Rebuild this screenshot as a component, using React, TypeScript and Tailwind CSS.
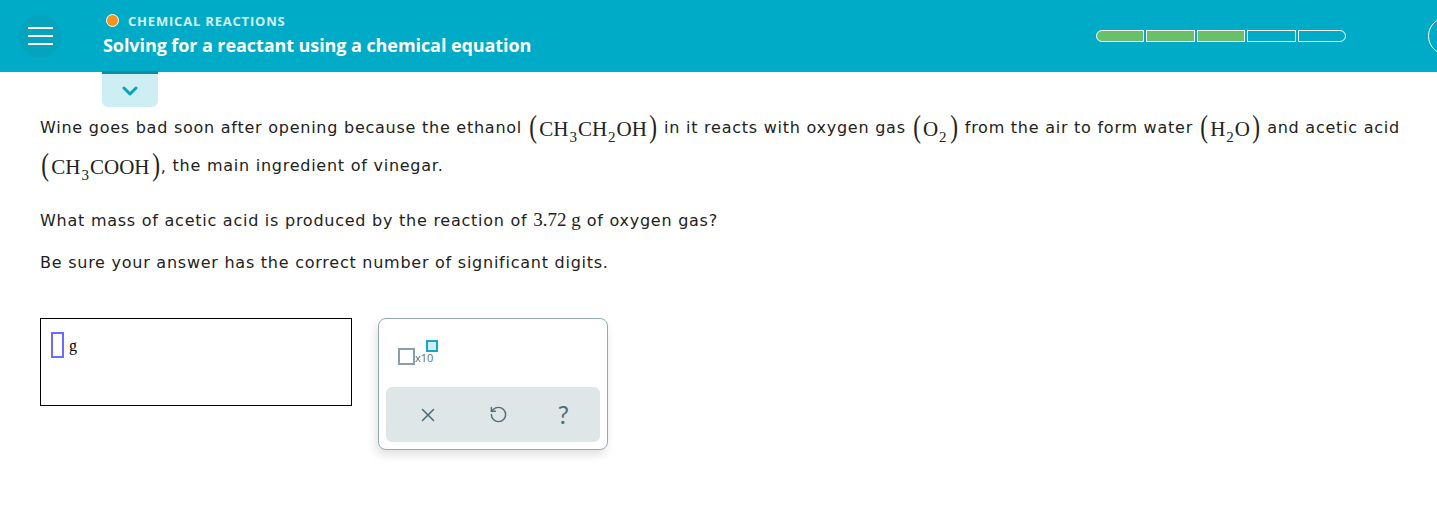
import { X, RotateCcw } from "lucide-react";

const serif = { fontFamily: '"Liberation Serif", "Times New Roman", serif' };

function Sub({ children }: { children: React.ReactNode }) {
  return (
    <span className="relative top-[6px] px-[1px] text-[15px] leading-none">
      {children}
    </span>
  );
}

function Formula({ children, after }: { children: React.ReactNode; after?: string }) {
  return (
    <span className="inline-flex items-center whitespace-nowrap align-middle leading-[24px]">
      <span className="inline-flex items-center text-[21px] tracking-normal text-[#222]" style={serif}>
        <span className="-mt-[3px] mr-[1px] text-[31px] font-light leading-[24px] scale-x-75">(</span>
        <span className="leading-[24px]">{children}</span>
        <span className="-mt-[3px] ml-[1px] text-[31px] font-light leading-[24px] scale-x-75">)</span>
      </span>
      {after}
    </span>
  );
}

function ProgressBar() {
  const steps = [true, true, true, false, false];
  return (
    <div className="flex h-[12px] w-[250px] gap-[2px]">
      {steps.map((done, i) => (
        <div
          key={i}
          className={`flex-1 border-[1.5px] border-white ${done ? "bg-[#6abf69]" : ""} ${
            i === 0 ? "rounded-l-full" : ""
          } ${i === steps.length - 1 ? "rounded-r-full" : ""}`}
        />
      ))}
    </div>
  );
}

export default function App() {
  return (
    <div className="min-h-[528px] bg-white" style={{ fontFamily: '"DejaVu Sans", Verdana, sans-serif' }}>
      {/* Header */}
      <header className="flex h-[72px] items-center overflow-hidden bg-[#00abc7]">
        <div className="flex w-[103px] shrink-0 pl-[19px]">
          <button className="flex h-[42px] w-[42px] flex-col items-center justify-center gap-[6px] rounded-full bg-[#05a3bd]">
            <span className="block h-[2px] w-[25px] bg-white" />
            <span className="block h-[2px] w-[25px] bg-white" />
            <span className="block h-[2px] w-[25px] bg-white" />
          </button>
        </div>
        <div className="flex-1 pb-[5px]" style={{ fontFamily: '"Open Sans", sans-serif' }}>
          <div className="flex items-center gap-[9px] pl-[3px]">
            <span className="h-[13px] w-[13px] rounded-full border-[1.5px] border-white bg-[#f7941d]" />
            <span className="text-[13px] font-bold leading-[18px] tracking-[0.8px] text-[#d3f0f5]">
              CHEMICAL REACTIONS
            </span>
          </div>
          <div className="mt-[4px] text-[18px] font-bold leading-[22px] tracking-[-0.08px] text-white">
            Solving for a reactant using a chemical equation
          </div>
        </div>
        <ProgressBar />
        <div className="ml-[82px] -mr-[29px] h-[38px] w-[38px] shrink-0 rounded-full border border-white" />
      </header>

      {/* Collapse tab */}
      <div className="ml-[102px] -mt-[1px] flex h-[36px] w-[56px] items-center justify-center rounded-b-[6px] border-t-[3px] border-[#0b8ea2] bg-[#cdeef3]">
        <svg width="16" height="10" viewBox="0 0 16 10" fill="none">
          <path d="M2 2l6 6 6-6" stroke="#0aa3bf" strokeWidth="3" strokeLinecap="round" strokeLinejoin="round" />
        </svg>
      </div>

      {/* Question */}
      <div className="pl-[40px] pr-[18px] text-[16px] tracking-[0.75px] text-[#222]">
        <p className="mt-[2px] leading-[38px]">
          Wine goes bad soon after opening because the ethanol{" "}
          <Formula>
            CH<Sub>3</Sub>CH<Sub>2</Sub>OH
          </Formula>{" "}
          in it reacts with oxygen gas{" "}
          <Formula>
            O<Sub>2</Sub>
          </Formula>{" "}
          from the air to form water{" "}
          <Formula>
            H<Sub>2</Sub>O
          </Formula>{" "}
          and acetic acid{" "}
          <Formula after=",">
            CH<Sub>3</Sub>COOH
          </Formula>{" "}
          the main ingredient of vinegar.
        </p>
        <p className="mt-[23px] leading-[24px]">
          What mass of acetic acid is produced by the reaction of{" "}
          <span className="text-[19px] tracking-normal" style={serif}>
            3.72 g
          </span>{" "}
          of oxygen gas?
        </p>
        <p className="mt-[18px] leading-[24px]">Be sure your answer has the correct number of significant digits.</p>

        {/* Answer area */}
        <div className="mt-[43px] flex items-start gap-[26px] tracking-normal">
          <div className="flex h-[88px] w-[312px] items-start border border-black pl-[10px] pt-[13px]">
            <span className="h-[26px] w-[13px] border-2 border-[#6b6bff]" />
            <span className="ml-[5px] mt-[2px] text-[16px] text-black" style={serif}>
              g
            </span>
          </div>

          <div className="flex h-[132px] w-[230px] flex-col rounded-[8px] border border-[#93a9b1] bg-white px-[7px] pb-[7px] shadow-[-2px_5px_10px_rgba(0,0,0,0.12)]">
            <div className="flex flex-1 items-start pl-[12px] pt-[21px]">
              <span className="mt-[8px] h-[17px] w-[17px] border-2 border-[#8aa0a8]" />
              <span className="mt-[12px] text-[11px] leading-none text-[#56727c]" style={{ fontFamily: '"Open Sans", sans-serif' }}>
                x10
              </span>
              <span className="-ml-[7px] h-[12px] w-[12px] border-2 border-[#1aa6c1] bg-[#cdeef3]" />
            </div>
            <div className="flex h-[55px] items-center justify-around rounded-[6px] bg-[#dfe6e8] px-[6px] text-[#4d6d78]">
              <X size={22} strokeWidth={1.7} />
              <RotateCcw size={19} strokeWidth={1.8} />
              <span className="text-[25px] leading-none" style={{ fontFamily: "Lato, sans-serif" }}>
                ?
              </span>
            </div>
          </div>
        </div>
      </div>
    </div>
  );
}
